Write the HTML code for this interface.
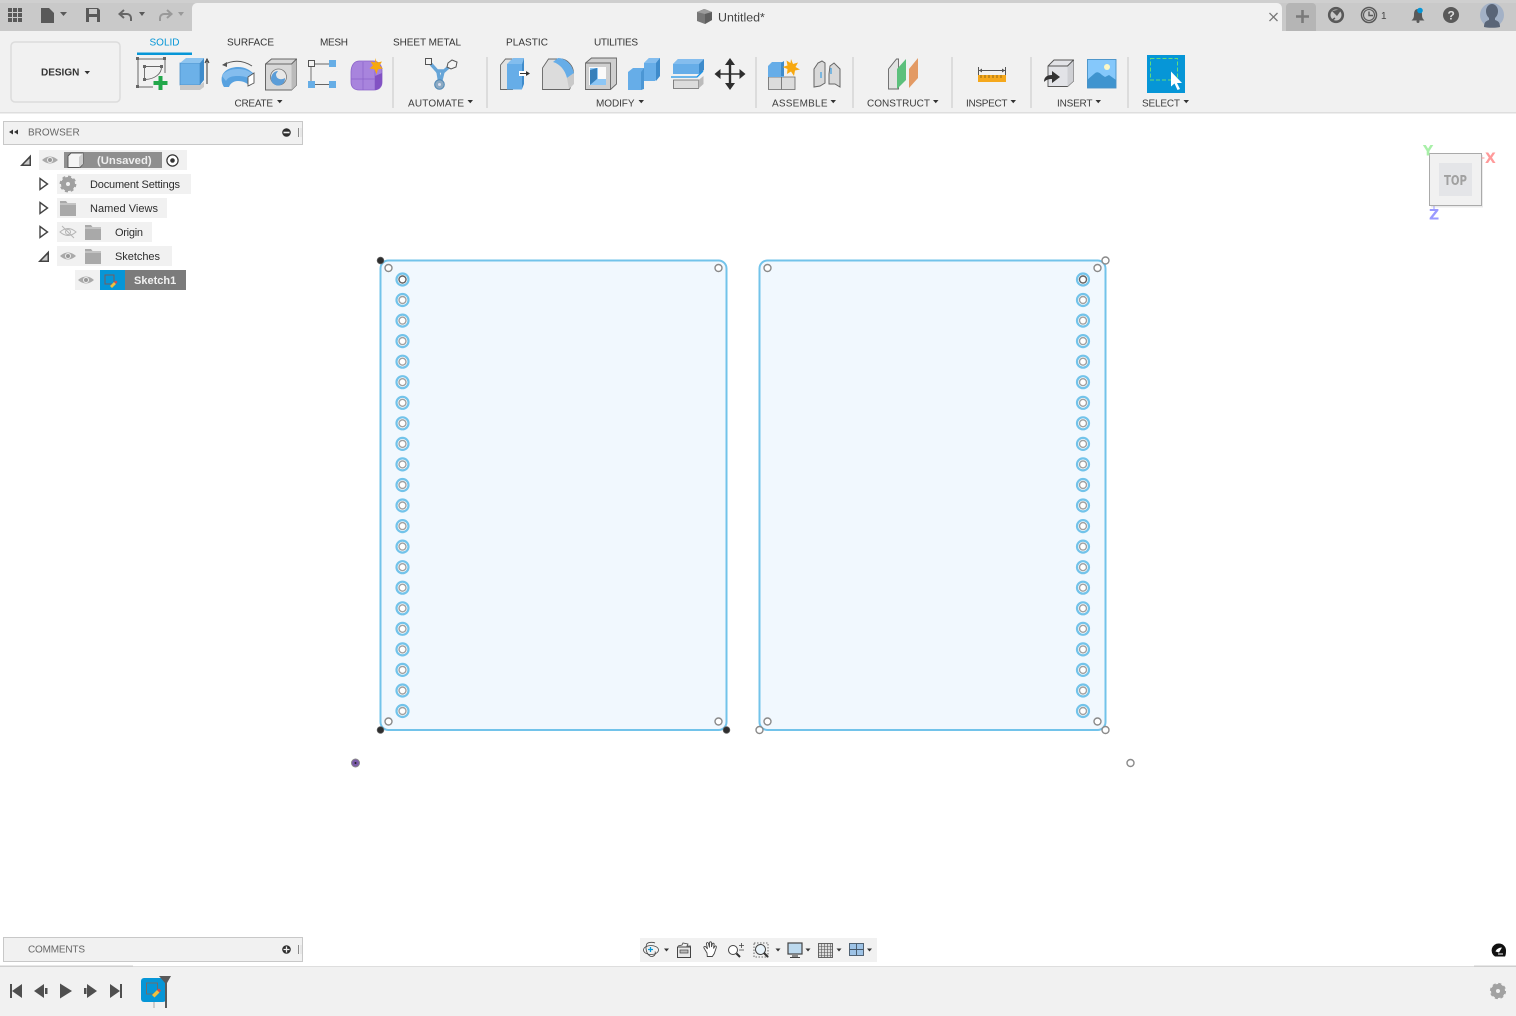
<!DOCTYPE html>
<html><head><meta charset="utf-8"><title>Untitled*</title>
<style>
html,body{margin:0;padding:0;background:#fff;width:1516px;height:1016px;overflow:hidden}
svg{display:block;position:absolute;left:0;top:0}
text{font-family:"Liberation Sans",Arial,sans-serif;font-size:10px;fill:#333}
.m{fill:#3c3c3c}
.tb{font-size:11px;fill:#2e2e2e}
</style></head><body>
<svg width="1516" height="1016" viewBox="0 0 1516 1016" xmlns="http://www.w3.org/2000/svg">
<defs>
<g id="hole"><circle r="6" fill="#fff" stroke="#72c3ea" stroke-width="2.200"/><circle r="3.500" fill="#fff" stroke="#a0a0a0" stroke-width="1.400"/></g>
<g id="pt"><circle r="3.500" fill="#fff" stroke="#8a8a8a" stroke-width="1.400"/></g>
<g id="blk"><circle r="3.400" fill="#2e2e2e" stroke="#666" stroke-width=".7"/></g>
<path id="car" d="M0 0h5.500l-2.750 3.200z" fill="#333"/>
<g id="eye"><path d="M-8 0Q0-7 8 0Q0 7-8 0z" fill="#aaa"/><circle r="3" fill="#eee"/><circle r="2" fill="#999"/></g>
<g id="fold"><path d="M0 0h6l1.500 2H16v13H0z" fill="#a9a9a9"/><path d="M0 3h16" stroke="#ddd"/></g>
</defs>

<!-- top bar -->
<rect width="1516" height="31" fill="#c9c9c9"/>
<rect y="0" width="1516" height="3" fill="#cfcfcf"/>
<path d="M192 31V8a5 5 0 0 1 5-5h1080a5 5 0 0 1 5 5v23z" fill="#f1f1f1"/>
<path d="M1286 31V7a4 4 0 0 1 4-4h22a4 4 0 0 1 4 4v24z" fill="#b5b5b5"/>
<rect y="31" width="1516" height="81" fill="#f1f1f1"/>
<rect y="112" width="1516" height="1.500" fill="#dedede"/>

<!-- top left icons -->
<g fill="#595959">
<rect x="8" y="8" width="4" height="4"/><rect x="13" y="8" width="4" height="4"/><rect x="18" y="8" width="4" height="4"/>
<rect x="8" y="13" width="4" height="4"/><rect x="13" y="13" width="4" height="4"/><rect x="18" y="13" width="4" height="4"/>
<rect x="8" y="18" width="4" height="4"/><rect x="13" y="18" width="4" height="4"/><rect x="18" y="18" width="4" height="4"/>
<path d="M41 8h8l5 5v10H41z"/>
<path d="M60 12h7l-3.500 4z"/>
<path d="M86 8h12l2 2v12H86zM89 9v5h8V9zM89 17v5h8v-5z" fill-rule="evenodd"/>
<path d="M139 12h6l-3 4z"/>
</g>
<path d="M131 21v-3a4 4 0 0 0-4-4h-6M124 10l-4.500 4 4.500 4" fill="none" stroke="#666" stroke-width="2"/>
<path d="M160 21v-3a4 4 0 0 1 4-4h6M167 10l4.500 4-4.500 4" fill="none" stroke="#999" stroke-width="2"/>
<path d="M178 12h6l-3 4z" fill="#999"/>

<!-- title -->
<path d="M697 12l7-3 8 3v8l-7 4-8-3z" fill="#777"/><path d="M697 12l8 2 7-2-7-3z" fill="#9c9c9c"/><path d="M705 14v10l7-4v-8z" fill="#5f5f5f"/>
<text x="718" y="21.500" style="font-size:12.400px;fill:#444">Untitled*</text>
<path d="M1269.500 13l8 8M1277.500 13l-8 8" stroke="#777" stroke-width="1.300"/>
<path d="M1302.500 10v13M1296 16.500h13" stroke="#7a7a7a" stroke-width="2.600"/>

<!-- top right icons -->
<circle cx="1336" cy="15" r="6.800" fill="none" stroke="#595959" stroke-width="2.600"/><path d="M1332 11l5 5 5-7zM1334 9l4 6" fill="#595959"/><path d="M1331 21l4-3" stroke="#595959" stroke-width="1.500"/>
<circle cx="1369" cy="15" r="7.500" fill="none" stroke="#595959" stroke-width="1.500"/><circle cx="1369" cy="15" r="5.500" fill="none" stroke="#595959" stroke-width="1.100"/><path d="M1369 11.500V15.500H1373" fill="none" stroke="#595959" stroke-width="1.400"/>
<text x="1381" y="19" style="fill:#444">1</text>
<path d="M1418 9c-3 0-4 2-4 6 0 3-1 4-2.500 5.500h13C1423 19 1422 18 1422 15c0-4-1-6-4-6z" fill="#595959"/><circle cx="1418" cy="21.500" r="1.500" fill="#595959"/><circle cx="1420" cy="10.500" r="2.800" fill="#0696d7"/>
<circle cx="1451" cy="15" r="8" fill="#595959"/><text x="1447.500" y="19.500" style="font-size:12px;font-weight:bold;fill:#ddd">?</text>
<circle cx="1492" cy="15" r="12" fill="#a3b1c6"/><path d="M1484 27c0-5 2-6 5-7v-2c-2-2-3-4-3-7 0-4 3-7 6-7s6 3 6 7c0 3-1 5-3 7v2c3 1 5 2 5 7-5 1-11 1-16 0z" fill="#5a6577"/>

<!-- design button -->
<rect x="11" y="42" width="109" height="60" rx="4" fill="#f1f1f1" stroke="#dcdcdc" stroke-width="1.500"/>
<text x="41" y="75.500" style="font-weight:bold;fill:#333">DESIGN</text><use href="#car" x="84.500" y="71"/>

<!-- tabs -->
<text x="149.500" y="45.500" style="fill:#0696d7">SOLID</text>
<rect x="137" y="52.500" width="55" height="2.500" fill="#0696d7"/>
<text x="227" y="45.500" textLength="47">SURFACE</text>
<text x="320" y="45.500" textLength="28">MESH</text>
<text x="393" y="45.500" textLength="68">SHEET METAL</text>
<text x="506" y="45.500" textLength="42">PLASTIC</text>
<text x="594" y="45.500" textLength="44">UTILITIES</text>

<!-- separators -->
<g fill="#dcdcdc"><rect x="392" y="57" width="2" height="51"/><rect x="486" y="57" width="2" height="51"/><rect x="755" y="57" width="2" height="51"/><rect x="852" y="57" width="2" height="51"/><rect x="951" y="57" width="2" height="51"/><rect x="1030" y="57" width="2" height="51"/><rect x="1127" y="57" width="2" height="51"/></g>

<!-- group labels -->
<text x="234.500" y="106.500" class="m" textLength="38.500">CREATE</text><use href="#car" x="277" y="100"/>
<text x="408" y="106.500" class="m" textLength="56">AUTOMATE</text><use href="#car" x="467.500" y="100"/>
<text x="596" y="106.500" class="m" textLength="38.500">MODIFY</text><use href="#car" x="638.500" y="100"/>
<text x="772" y="106.500" class="m" textLength="55.500">ASSEMBLE</text><use href="#car" x="830.500" y="100"/>
<text x="867" y="106.500" class="m" textLength="63">CONSTRUCT</text><use href="#car" x="933" y="100"/>
<text x="966" y="106.500" class="m" textLength="41.500">INSPECT</text><use href="#car" x="1010.500" y="100"/>
<text x="1057" y="106.500" class="m" textLength="35.500">INSERT</text><use href="#car" x="1095.500" y="100"/>
<text x="1142" y="106.500" class="m" textLength="38">SELECT</text><use href="#car" x="1183.500" y="100"/>

<!-- sketch icon -->
<g>
<path d="M138 59h27v14M138 59v28h15" fill="none" stroke="#666" stroke-width="1"/>
<g fill="#666"><rect x="136" y="57" width="3" height="3"/><rect x="163" y="57" width="3" height="3"/><rect x="136" y="85" width="3" height="3"/><rect x="143" y="65" width="3" height="3"/><rect x="143" y="78" width="3" height="3"/><rect x="160" y="65" width="3" height="3"/></g>
<path d="M144.500 67v12M145 66.500h16M161.500 67c0 7-7 12-16 12.500" fill="none" stroke="#666" stroke-width=".9"/>
<path d="M158.500 76h4v5h5v4h-5v5h-4v-5h-5v-4h5z" fill="#22a84a"/>
</g>
<!-- extrude -->
<path d="M180 63h20v22h-20z" fill="#6cb1e8" stroke="#4a8fc9" stroke-width=".8"/><path d="M180 63l6-5h18l-4 5z" fill="#8dc4ef"/><path d="M200 63l4-5v22l-4 5z" fill="#3e8bcb"/>
<path d="M180 85h20l4-3v5l-4 3h-20z" fill="#c8c8c8"/>
<path d="M207 84V61M205 63l2-4 2 4" fill="none" stroke="#333" stroke-width="1"/>
<!-- revolve -->
<path d="M223 65q15-8 29 1" fill="none" stroke="#555" stroke-width="1"/><path d="M222 65l5-3v5z" fill="#555"/>
<path d="M222 76c2-6 9-9 16-9s12 3 16 7l-4 12c-3-3-7-5-12-5-5 0-8 3-9 6h-5c-2-3-3-7-2-11z" fill="#58a2e0"/><path d="M222 76c3-5 9-7 16-7s11 2 15 5l-3 5c-3-2-7-3-12-3-6 0-10 1-12 5z" fill="#84bdee"/>
<path d="M248 77l6-4v10l-6 3z" fill="#fff" stroke="#555" stroke-width=".9"/>
<!-- hole -->
<path d="M265.500 64l6-5h25v26l-5 5h-26z" fill="#d8d8d8" stroke="#666" stroke-width="1"/><path d="M291.500 64v26l5-5V59z" fill="#bbb"/><path d="M265.500 64h26l5-5" fill="none" stroke="#666"/>
<circle cx="278.500" cy="77" r="8" fill="#e8e8e8" stroke="#777" stroke-width=".8"/><path d="M272 75a7 7 0 1 0 13 3c-3 2-9 2-9-4l2-3c-3 0-5 2-6 4z" fill="#5b9dd8"/>
<!-- box pts -->
<path d="M311 64h21M311 66v17M313 84.500h20" stroke="#666" stroke-width=".9"/>
<rect x="308.500" y="60.500" width="6" height="6" fill="#f4f4f4" stroke="#555"/>
<rect x="329" y="60" width="7" height="7" fill="#67aee6"/><rect x="308" y="81" width="7" height="7" fill="#67aee6"/><rect x="329" y="81" width="7" height="7" fill="#67aee6"/>
<!-- form -->
<path d="M351 72c0-6 3-11 8-11h14c5 0 9 4 9 9v12c0 5-3 8-8 8h-15c-5 0-8-3-8-8z" fill="#a884dd" stroke="#8a62c9" stroke-width=".8"/><path d="M351 79h24M363 62v28M375 69v21" stroke="#8a62c9" stroke-width=".7"/><path d="M375 76l7-3v9c0 4-3 8-7 8z" fill="#8252c3"/>
<path d="M375 58l2 4.500 5-1-2.500 4 3.500 3-5 .8-1.500 5-2-5-5-.8 3.500-3-2.500-4 4.800 1z" fill="#f7a80f"/>
<!-- automate -->
<path d="M430 63l8 9 2 12 3-12 8-7M436 71h8" fill="none" stroke="#66a5d8" stroke-width="3.400"/>
<circle cx="439.500" cy="84.500" r="4.800" fill="#8aa9c2" stroke="#4f87b5"/><circle cx="439.500" cy="84.500" r="1.500" fill="#dde"/>
<rect x="425.500" y="58.500" width="6" height="6" fill="#f4f4f4" stroke="#555"/><path d="M448 63l4-3 5 2-1 5-5 2-4-2z" fill="#f4f4f4" stroke="#555"/>
<!-- press pull -->
<path d="M500.500 89.500V65l5-6h7v30.500z" fill="#e3e3e3" stroke="#666" stroke-width=".9"/>
<path d="M507 64h15v25.500h-15z" fill="#66ade8"/><path d="M507 64l6-6h11l-2 6z" fill="#82bdee"/><path d="M522 64l2-6v26l-2 5z" fill="#3e8bcb"/>
<path d="M519 71h8v5h-8z" fill="#fff"/><path d="M520 73.500h7" stroke="#333" stroke-width="1"/><path d="M526 71l4 2.500-4 2.500z" fill="#333"/>
<!-- fillet -->
<path d="M542.500 89.500V68l6-9h12c7 0 13 7 13 14v7l-4 9.500z" fill="#dcdcdc" stroke="#666" stroke-width=".9"/>
<path d="M553 62l5-4c7 0 14 6 16 15l-7 5c-2-8-7-14-14-16z" fill="#66ade8"/><path d="M567 78l7-5v11l-5 5z" fill="#c9c9c9"/>
<!-- shell -->
<path d="M585.500 63l6-5h25v26l-6 5.500h-25z" fill="#cfcfcf" stroke="#666" stroke-width=".9"/><path d="M585.500 63h25v26.500" fill="none" stroke="#666" stroke-width=".9"/>
<path d="M589 67h17v18h-17z" fill="#fafafa"/><path d="M590 68h8v11h8v6h-16z" fill="#8cc6f5"/><path d="M590 70l7-2v11l-7 6z" fill="#367fba"/>
<!-- combine -->
<path d="M628 72l5-4h11V63l5-5h11v18l-5 5h-12v8l-2 1h-13z" fill="#66ade8"/><path d="M644 63l5-5h11l-4 5z" fill="#84bdee"/><path d="M656 63l4-5v18l-4 5z" fill="#3e8bcb"/><path d="M641 72l3-4v21l-3 1z" fill="#4b96d4"/>
<!-- split -->
<path d="M673 64l5-5h26l-5 5v10h-26z" fill="#66ade8"/><path d="M673 64l5-5h26l-5 5z" fill="#84bdee"/><path d="M699 64l5-5v11l-5 4z" fill="#3e8bcb"/>
<path d="M671 77h26l6-6" fill="none" stroke="#1c93e5" stroke-width="1.300"/>
<path d="M673.500 80h25v8.500h-25z" fill="#dcdcdc" stroke="#666" stroke-width=".8"/><path d="M698.500 80l5-4v8l-5 4.500z" fill="#bbb"/>
<!-- move -->
<path d="M730 58l5 7h-3.800v8.300h8.300V69l6 5-6 5v-4.200h-8.300V83h3.800l-5 7-5-7h3.800v-8.200h-8.300V79l-6-5 6-5v4.300h8.300V65H725z" fill="#2e2e2e"/>
<!-- assemble -->
<path d="M768.500 77h13v12.500h-13zM781.500 77h13.500v12.500h-13.500z" fill="#dcdcdc" stroke="#666" stroke-width=".8"/>
<path d="M768 66l4-4h12v15h-16z" fill="#66ade8"/><path d="M781 76v-13l3-2v15z" fill="#3e8bcb"/>
<path d="M791 59l2 5 5-1.500-2.500 4.500 4.500 2.500-5 1-1 5.500-3-4.500-4 2.500.5-5-5-2 5-1.500-1-5 4 2.500z" fill="#f7a80f"/>
<!-- joint -->
<path d="M814 69l4-6 4-2 3 2v20l-5 3-6 1z" fill="#d9d9d9" stroke="#666" stroke-width="1"/>
<path d="M829 74l1-8 4-3 6 6v18l-5-3h-6z" fill="#d9d9d9" stroke="#666" stroke-width="1"/>
<path d="M821 72v6M831 68v6" stroke="#1c93e5" stroke-width="1"/>
<!-- construct -->
<path d="M888.500 89V69l8-10h2v30z" fill="#e3e3e3" stroke="#666" stroke-width=".9"/>
<path d="M897 89V69l9-10v21z" fill="#5cc07c"/><path d="M909 88V69l9-11v20z" fill="#e39a64"/>
<!-- ruler -->
<path d="M978.500 67v8M1005.500 67v8M979 70.500h26" stroke="#555" stroke-width="1"/><path d="M979 70.500l3-2v4zM1005 70.500l-3-2v4z" fill="#555"/>
<rect x="978" y="75" width="28" height="7" fill="#f5a81c"/><path d="M981 75v3M985 75v3M989 75v3M993 75v3M997 75v3M1001 75v3" stroke="#7d5a12" stroke-width=".8"/>
<!-- insert -->
<path d="M1048 66l6-6h19.500v21l-6 5.500H1048z" fill="#e2e3e7" stroke="#555" stroke-width=".9"/><path d="M1067.500 66v20.500l6-5.500V60z" fill="#cfd0d4"/><path d="M1048 66h19.500l6-6" fill="none" stroke="#555" stroke-width=".9"/>
<path d="M1044 82c0-5 3-7 8-7v-4l8 6-8 6v-4c-4 0-6 1-8 3z" fill="#333"/>
<!-- image -->
<rect x="1087" y="59" width="29" height="29" fill="#85c8fb"/><path d="M1087 80l7-6c3-3 5-2 8 1l3 2 4-2 7 5v8H1087z" fill="#3f94cf"/><circle cx="1107" cy="67" r="3" fill="#fbf7c6"/><rect x="1087.500" y="59.500" width="28.500" height="28.500" fill="none" stroke="#4a92c6" stroke-width=".9"/>
<!-- select -->
<rect x="1147" y="55" width="38" height="38" fill="#0696d7"/>
<rect x="1150.500" y="58.500" width="27" height="21.500" fill="none" stroke="#65dc7a" stroke-width="1" stroke-dasharray="4 2"/>
<path d="M1171 71.500v15l3.500-3 3 6.500 2.500-1-3-6h5z" fill="#fff"/>

<!-- browser panel -->
<rect x="3.500" y="121.500" width="299" height="23" fill="#f1f1f1" stroke="#c8c8c8"/>
<path d="M13 129.500v5l-4-2.500zM18 129.500v5l-4-2.500z" fill="#333"/>
<text x="28" y="135.500" style="fill:#666">BROWSER</text>
<circle cx="286.500" cy="132.500" r="4.300" fill="#2e2e2e"/><rect x="283.500" y="131.700" width="6" height="1.600" fill="#f1f1f1"/>
<path d="M298.500 128v9" stroke="#888"/><path d="M301 128v9" stroke="#ddd"/>

<!-- tree -->
<path d="M31 154.500v11.500H20z" fill="#444"/><path d="M29.500 158.500v6H23.500z" fill="#ccc"/>
<rect x="39" y="150" width="148" height="20" fill="#f1f1f1"/>
<use href="#eye" x="50" y="160"/>
<rect x="64" y="152" width="98" height="16" fill="#8f8f8f"/>
<path d="M68 156l3-3h12v11l-3 3.500H68z" fill="#f4f4f4" stroke="#555" stroke-width=".9"/><path d="M79 157l4-4v11l-4 3.500z" fill="#cfcfcf"/>
<text x="97" y="164" style="font-size:11.300px;font-weight:bold;fill:#eee">(Unsaved)</text>
<circle cx="172.500" cy="160.500" r="5.600" fill="#fff" stroke="#333" stroke-width="1.200"/><circle cx="172.500" cy="160.500" r="2.300" fill="#333"/>

<path d="M40 178.500l7.500 5.500-7.500 5.500z" fill="#fff" stroke="#444" stroke-width="1.400"/>
<rect x="57" y="174" width="134" height="20" fill="#f1f1f1"/>
<circle cx="68" cy="184" r="4.500" fill="none" stroke="#a0a0a0" stroke-width="5"/><circle cx="68" cy="184" r="7.300" fill="none" stroke="#a0a0a0" stroke-width="2.200" stroke-dasharray="3 2.700"/>
<text x="90" y="188" class="tb" textLength="90">Document Settings</text>

<path d="M40 202.500l7.500 5.500-7.500 5.500z" fill="#fff" stroke="#444" stroke-width="1.400"/>
<rect x="57" y="198" width="110" height="20" fill="#f1f1f1"/>
<use href="#fold" x="60" y="201"/>
<text x="90" y="212" class="tb" textLength="68">Named Views</text>

<path d="M40 226.500l7.500 5.500-7.500 5.500z" fill="#fff" stroke="#444" stroke-width="1.400"/>
<rect x="57" y="222" width="95" height="20" fill="#f1f1f1"/>
<path d="M60 232q8-7 16 0q-8 7-16 0z" fill="none" stroke="#b5b5b5"/><circle cx="68" cy="232" r="2.500" fill="none" stroke="#b5b5b5"/><path d="M62 226l12 12" stroke="#b5b5b5"/>
<use href="#fold" x="85" y="225"/>
<text x="115" y="236" class="tb" textLength="28">Origin</text>

<path d="M49 250.500v11.500H38z" fill="#444"/><path d="M47.500 254.500v6H41.500z" fill="#ccc"/>
<rect x="57" y="246" width="115" height="20" fill="#f1f1f1"/>
<use href="#eye" x="68" y="256"/>
<use href="#fold" x="85" y="249"/>
<text x="115" y="260" class="tb" textLength="45">Sketches</text>

<rect x="75" y="270" width="111" height="20" fill="#f1f1f1"/>
<use href="#eye" x="86" y="280"/>
<rect x="100" y="270" width="25" height="20" fill="#0696d7"/>
<rect x="125" y="270" width="61" height="20" fill="#7b7b7b"/>
<rect x="105" y="275" width="9" height="9" fill="none" stroke="#7a5c5c" stroke-width="1"/>
<path d="M110 286l4-4 2 2-4 4z" fill="#f0c040"/><path d="M114 282l2-1.500 1.500 1.500-1.500 2z" fill="#d94b4b"/>
<text x="134" y="284" style="font-size:11px;font-weight:bold;fill:#f1f1f1">Sketch1</text>

<!-- sketch profiles -->
<rect x="380.500" y="260.500" width="346" height="469.500" rx="8" fill="#f1f8fe" stroke="#72c3ea" stroke-width="2"/>
<rect x="759.500" y="260.500" width="346" height="469.500" rx="8" fill="#f1f8fe" stroke="#72c3ea" stroke-width="2"/>

<use href="#hole" x="402.500" y="279.500"/><use href="#hole" x="402.500" y="300"/><use href="#hole" x="402.500" y="320.600"/><use href="#hole" x="402.500" y="341.100"/><use href="#hole" x="402.500" y="361.700"/><use href="#hole" x="402.500" y="382.200"/><use href="#hole" x="402.500" y="402.800"/><use href="#hole" x="402.500" y="423.300"/><use href="#hole" x="402.500" y="443.900"/><use href="#hole" x="402.500" y="464.400"/><use href="#hole" x="402.500" y="485"/><use href="#hole" x="402.500" y="505.500"/><use href="#hole" x="402.500" y="526.100"/><use href="#hole" x="402.500" y="546.600"/><use href="#hole" x="402.500" y="567.200"/><use href="#hole" x="402.500" y="587.700"/><use href="#hole" x="402.500" y="608.300"/><use href="#hole" x="402.500" y="628.800"/><use href="#hole" x="402.500" y="649.400"/><use href="#hole" x="402.500" y="669.900"/><use href="#hole" x="402.500" y="690.500"/><use href="#hole" x="402.500" y="711"/>
<use href="#hole" x="1083" y="279.500"/><use href="#hole" x="1083" y="300"/><use href="#hole" x="1083" y="320.600"/><use href="#hole" x="1083" y="341.100"/><use href="#hole" x="1083" y="361.700"/><use href="#hole" x="1083" y="382.200"/><use href="#hole" x="1083" y="402.800"/><use href="#hole" x="1083" y="423.300"/><use href="#hole" x="1083" y="443.900"/><use href="#hole" x="1083" y="464.400"/><use href="#hole" x="1083" y="485"/><use href="#hole" x="1083" y="505.500"/><use href="#hole" x="1083" y="526.100"/><use href="#hole" x="1083" y="546.600"/><use href="#hole" x="1083" y="567.200"/><use href="#hole" x="1083" y="587.700"/><use href="#hole" x="1083" y="608.300"/><use href="#hole" x="1083" y="628.800"/><use href="#hole" x="1083" y="649.400"/><use href="#hole" x="1083" y="669.900"/><use href="#hole" x="1083" y="690.500"/><use href="#hole" x="1083" y="711"/>
<circle cx="402.500" cy="279.500" r="3.500" fill="#fff" stroke="#666" stroke-width="1.400"/>
<circle cx="1083" cy="279.500" r="3.500" fill="#fff" stroke="#666" stroke-width="1.400"/>

<use href="#pt" x="388.500" y="268"/><use href="#pt" x="718.500" y="268"/><use href="#pt" x="388.500" y="721.500"/><use href="#pt" x="718.500" y="721.500"/>
<use href="#pt" x="767.500" y="268"/><use href="#pt" x="1097.500" y="268"/><use href="#pt" x="767.500" y="721.500"/><use href="#pt" x="1097.500" y="721.500"/>
<use href="#pt" x="1105.500" y="260.500"/><use href="#pt" x="759.500" y="730"/><use href="#pt" x="1105.500" y="730"/><use href="#pt" x="1130.500" y="763"/>
<use href="#blk" x="380.500" y="260.500"/><use href="#blk" x="380.500" y="730"/><use href="#blk" x="726.500" y="730"/>
<circle cx="355.500" cy="763" r="4" fill="#7a5aa8" stroke="#8a8a8a" stroke-width="1"/><circle cx="355.500" cy="763" r="1" fill="#222"/>

<!-- view cube -->
<rect x="1431" y="155" width="52" height="52.500" fill="#ccc" opacity=".4"/>
<rect x="1429.500" y="153.500" width="52" height="52" fill="#f1f1f1" stroke="#aaa" stroke-width="1"/>
<rect x="1439" y="163" width="33" height="33" fill="#e4e5e8"/>
<text x="1444" y="185" style="font-size:13px;font-weight:bold;fill:#a0a0a0;font-family:'DejaVu Sans',sans-serif" textLength="23" lengthAdjust="spacingAndGlyphs">TOP</text>
<text x="1423" y="155.500" style="font-size:14px;font-weight:bold;fill:#a8f0a8;font-family:'DejaVu Sans',sans-serif">Y</text>
<path d="M1481.500 158h3" stroke="#ff9a9a"/><text x="1485" y="163" style="font-size:14px;font-weight:bold;fill:#ff9a9a;font-family:'DejaVu Sans',sans-serif">X</text>
<text x="1429" y="219.500" style="font-size:14px;font-weight:bold;fill:#9a9aff;font-family:'DejaVu Sans',sans-serif">Z</text><path d="M1434 206v3" stroke="#9a9aff"/>

<!-- comments panel -->
<rect x="3.500" y="937.500" width="299" height="24" fill="#f1f1f1" stroke="#c8c8c8"/>
<text x="28" y="952.500" style="fill:#666" textLength="57">COMMENTS</text>
<circle cx="286.500" cy="949.500" r="4.300" fill="#2e2e2e"/><path d="M283.500 949.500h6M286.500 946.500v6" stroke="#f1f1f1" stroke-width="1.300"/>
<path d="M298.500 945v9" stroke="#888"/><path d="M301 945v9" stroke="#ddd"/>

<!-- nav bar -->
<rect x="640" y="938" width="237" height="24" fill="#f1f1f1"/>
<ellipse cx="651" cy="950" rx="7.500" ry="4.500" fill="none" stroke="#444" stroke-width=".8"/><path d="M647 943.500c-2 4-1 11 4 13 4 0 5-3 4-5M655 943c-2-1-6-1-8 .5" fill="none" stroke="#444" stroke-width=".8"/><path d="M648 949.500h5M650.500 947v5" stroke="#0696d7" stroke-width="1.300"/>
<path d="M664 948.500h5l-2.500 3z" fill="#333"/>
<rect x="677.500" y="947" width="13" height="10.500" fill="#e8e8e8" stroke="#444" stroke-width="1"/><rect x="680" y="950" width="8" height="3" fill="#bbb" stroke="#444" stroke-width=".7"/><path d="M678 946l4-1 1-2 5 1-1 2h4" fill="none" stroke="#444" stroke-width=".8"/>
<path transform="translate(2 0)" d="M705 953l-3-5c-.8-1.500 1-2 2-1l1.500 2-1-5c-.3-1.500 1.500-2 2-.5l1 4V943c0-1.500 2-1.500 2 0v4l.8-3c.4-1.300 2-1 1.800.5l-.6 4 1.200-2c.8-1 2-.5 1.600 1l-2 6-2 3h-5z" fill="#fff" stroke="#444" stroke-width=".9"/>
<circle cx="733" cy="950" r="4.500" fill="#fff" stroke="#444" stroke-width="1"/><path d="M736.500 953.500l3.500 3.500" stroke="#333" stroke-width="2"/><path d="M741.500 943v5M739 945.500h5M739 950h5" stroke="#444" stroke-width=".8"/>
<rect x="754" y="943" width="14" height="14" fill="none" stroke="#444" stroke-width=".8" stroke-dasharray="1.500 1.500"/><circle cx="760.500" cy="949.500" r="5" fill="#e9f3fa" stroke="#444" stroke-width="1"/><path d="M764 953l4 4" stroke="#333" stroke-width="2"/>
<path d="M775.500 948.500h5l-2.500 3z" fill="#333"/>
<rect x="788" y="943" width="14" height="11" fill="#bcd9ee" stroke="#444" stroke-width="1.200"/><path d="M792 955h6v2h-6z" fill="#888"/><path d="M790 957.500h10" stroke="#444"/>
<path d="M805.500 948.500h5l-2.500 3z" fill="#333"/>
<rect x="818.500" y="943.500" width="14" height="14" fill="#ddd" stroke="#444" stroke-width=".8"/><path d="M821.500 943.500v14M824.500 943.500v14M827.500 943.500v14M830.500 943.500v14M818.500 946.500h14M818.500 949.500h14M818.500 952.500h14M818.500 955.500h14" stroke="#555" stroke-width=".6"/>
<path d="M836.500 948.500h5l-2.500 3z" fill="#333"/>
<rect x="849.500" y="943.500" width="14" height="12" fill="#9ec3e6" stroke="#445566" stroke-width=".9"/><path d="M856.500 943.500v12M849.500 949.500h14" stroke="#445566" stroke-width=".9"/>
<path d="M867 948.500h5l-2.500 3z" fill="#333"/>

<!-- analytics glyph -->
<path d="M1499 943.500a7 7 0 0 1 7 6.500c0 2 0 5-1 6.500h-10a7 7 0 0 1 4-13z" fill="#111"/><path d="M1495.500 951.500c1-2.500 3.500-4 6.500-4l-3 5z" fill="#fff"/><path d="M1498 954h5" stroke="#fff"/>

<!-- timeline -->
<rect y="966" width="1516" height="50" fill="#f1f1f1"/>
<rect y="966" width="1516" height="1" fill="#dedede"/><rect y="965.500" width="133" height="1.500" fill="#cfcfcf"/><rect x="1474" y="965.500" width="42" height="1.500" fill="#cfcfcf"/>
<g fill="#4f4f4f">
<rect x="10" y="984" width="2" height="14"/><path d="M22 984v14l-10-7z"/>
<path d="M44 984v14l-10-7z"/><rect x="45" y="988" width="2.500" height="6"/>
<path d="M60 983.500l12 7.500-12 7.500z"/>
<rect x="84" y="988" width="2.500" height="6"/><path d="M87 984v14l10-7z"/>
<path d="M110 984v14l10-7z"/><rect x="120" y="984" width="2" height="14"/>
</g>
<rect x="141" y="978" width="25" height="24" rx="3" fill="#0696d7"/>
<rect x="146.500" y="983" width="11" height="11" fill="none" stroke="#6d6d6d" stroke-width="1"/>
<path d="M152 995l5-5 2.500 2.500-5 5z" fill="#f0c040"/><path d="M157 990l2-1.500 2 2-1.500 2z" fill="#d94b4b"/>
<rect x="153" y="1002" width="2" height="6" fill="#ccc"/>
<path d="M159 976h12l-4 7v25h-2v-25z" fill="#5a5a5a"/>
<circle cx="1498" cy="991" r="4.500" fill="none" stroke="#a2a2a2" stroke-width="5"/><circle cx="1498" cy="991" r="7" fill="none" stroke="#a2a2a2" stroke-width="2.200" stroke-dasharray="3 2.500"/>
</svg>
</body></html>
